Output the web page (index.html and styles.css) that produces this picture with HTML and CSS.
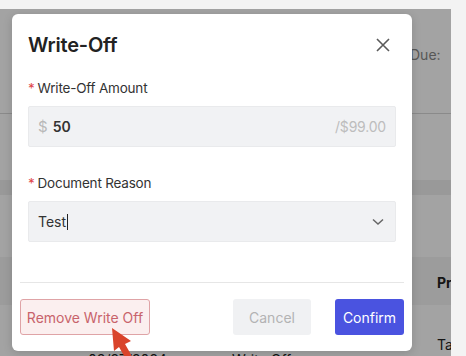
FILE: index.html
```html
<!DOCTYPE html>
<html>
<head>
<meta charset="utf-8">
<link rel="stylesheet" href="styles.css">
</head>
<body>
<div class="page">
  <div class="bg">
    <div class="summary">Due:</div>
    <div class="gap1"></div>
    <div class="band"></div>
    <div class="gap2"></div>
    <div class="thead"><span class="th">Pr</span></div>
    <div class="trow">
      <span class="c-exp">›</span>
      <span class="c-date">03/27/2024</span>
      <span class="c-type">Write Off</span>
      <span class="c-ta">Ta</span>
    </div>
  </div>
  <div class="backdrop"></div>
  <div class="modal">
    <div class="modal-head">
      <h2 class="title">Write-Off</h2>
      <button class="close" aria-label="Close">
        <svg width="14" height="14" viewBox="0 0 14 14"><path d="M1 1L13 13M13 1L1 13" stroke="#5a5a5a" stroke-width="1.6" fill="none"/></svg>
      </button>
    </div>
    <div class="form">
      <label class="label"><span class="req">*</span>Write-Off Amount</label>
      <div class="input amount">
        <span class="prefix">$</span>
        <span class="val">50</span>
        <span class="suffix">/$99.00</span>
      </div>
      <label class="label second"><span class="req">*</span>Document Reason</label>
      <div class="input select">
        <span class="text">Test</span><span class="caret"></span>
        <svg class="chev" width="12" height="8" viewBox="0 0 12 8"><path d="M1 1.5L6 6L11 1.5" stroke="#666" stroke-width="1.5" fill="none"/></svg>
      </div>
    </div>
    <div class="divider"></div>
    <div class="footer">
      <button class="btn remove">Remove Write Off</button>
      <div class="right">
        <button class="btn cancel">Cancel</button>
        <button class="btn confirm">Confirm</button>
      </div>
    </div>
  </div>
  <svg class="pointer" width="466" height="356" viewBox="0 0 466 356">
    <polygon points="112,319 131,332 125,335 133,349 127,352 119,338 114,342" fill="#d9442b"/>
  </svg>
</div>
</body>
</html>
```

FILE: styles.css
```css
* { box-sizing: border-box; }
html, body { margin: 0; padding: 0; }
body {
  width: 466px;
  height: 356px;
  overflow: hidden;
  background: #f3f3f3;
  font-family: Inter, "Noto Sans", sans-serif;
}
.page {
  position: relative;
  margin-top: 9px;
  width: 451px;
  height: 347px;
  background: #ffffff;
  overflow: hidden;
}
.bg { display: flex; flex-direction: column; color: #333; font-size: 14px; }
.summary {
  height: 105px;
  padding: 37px 0 0 410px;
  line-height: 18px;
  color: #888;
  border-bottom: 1px solid #d8d8d8;
}
.gap1 { height: 66px; }
.band { height: 15px; background: #efefef; }
.gap2 { height: 62px; }
.thead { height: 48px; background: #f4f4f4; padding: 17px 0 0 437px; line-height: 18px; font-weight: 700; color: #222; }
.trow { position: relative; height: 60px; display: grid; grid-template-columns: 50px 144px 205px 1fr; padding-left: 38px; line-height: 18px; color: #222; }
.c-exp, .c-date, .c-type { padding-top: 46px; }
.c-ta { padding-top: 31px; }
.backdrop {
  position: absolute;
  inset: 0;
  background: rgba(0, 0, 0, 0.36);
}
.modal {
  position: absolute;
  left: 12px;
  top: 5px;
  width: 400px;
  height: 337px;
  background: #fff;
  border-radius: 6px;
  box-shadow: 0 2px 10px rgba(0,0,0,0.15);
  display: flex;
  flex-direction: column;
  padding-top: 17px;
}
.modal-head {
  display: flex;
  align-items: center;
  justify-content: space-between;
  padding: 0 22px 0 16px;
  height: 28px;
}
.title {
  margin: 0;
  font-size: 20px;
  line-height: 28px;
  font-weight: 600;
  color: #222;
  letter-spacing: -0.2px;
}
.close {
  border: 0;
  background: none;
  padding: 0;
  width: 14px;
  height: 14px;
  display: flex;
}
.form {
  display: flex;
  flex-direction: column;
  padding: 19px 16px 0;
}
.label {
  font-size: 13.5px;
  line-height: 20px;
  color: #333;
  margin-bottom: 8px;
  letter-spacing: -0.2px;
}
.label.second { margin-top: 26px; }
.req { color: #e0464b; margin-right: 3px; }
.input {
  height: 41px;
  background: #f1f2f4;
  border: 1px solid #e9eaec;
  border-radius: 2px;
  display: flex;
  align-items: center;
  padding: 0 9px;
  font-size: 14px;
}
.prefix { color: #b8b8b8; margin-right: 5px; font-size: 15px; }
.val { color: #333; font-weight: 600; }
.suffix { margin-left: auto; color: #bdbdbd; font-size: 14px; letter-spacing: -0.2px; }
.select .text { color: #333; }
.caret { width: 1px; height: 16px; background: #222; margin-left: 1px; }
.chev { margin-left: auto; margin-right: 2px; }
.divider {
  margin: 40px 8px 0;
  height: 1px;
  background: #e6e6e6;
}
.footer {
  display: flex;
  justify-content: space-between;
  padding: 16px 8px 0;
}
.right { display: flex; gap: 24px; }
.btn {
  height: 36px;
  border-radius: 3px;
  font-family: Inter, "Noto Sans", sans-serif;
  font-size: 14px;
  border: 1px solid transparent;
  padding: 0;
}
.remove {
  width: 130px;
  background: #fbefef;
  border-color: #dfa3a6;
  color: #c8636b;
}
.cancel {
  width: 78px;
  background: #f0f1f3;
  color: #b3b3b3;
}
.confirm {
  width: 69px;
  background: #4a53e0;
  color: #fff;
}
.pointer {
  position: absolute;
  left: 0;
  top: 0;
  pointer-events: none;
}
```
